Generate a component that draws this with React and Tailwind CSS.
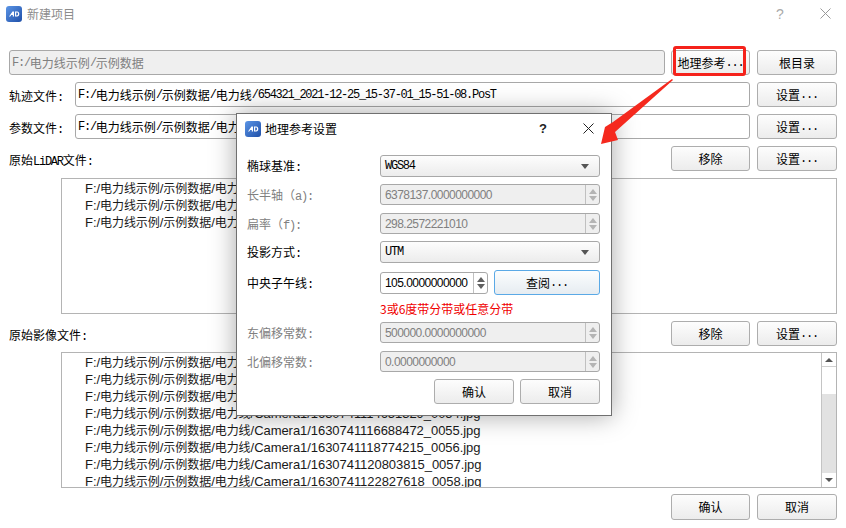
import React from 'react';

const CJK = '"Noto Sans CJK SC", sans-serif';

// qt-style mixed text: cjk at 12px, latin squeezed like the bitmap font
const Mono = ({ children }) => {
  const parts = children.split(/([\u4e00-\u9fff（）]+)/);
  return (
    <>
      {parts.map((p, i) =>
        /[\u4e00-\u9fff（）]/.test(p) ? (
          <span key={i} className="text-[12px] font-['Noto_Sans_CJK_SC']">{p}</span>
        ) : (
          <span key={i} className="text-[12px] tracking-[-1.25px] font-['Liberation_Mono']">{p}</span>
        )
      )}
    </>
  );
};

const Btn = ({ children, className = '' }) => (
  <button className={`h-[25px] rounded-[3px] border border-[#adadad] bg-gradient-to-b from-[#fdfdfd] to-[#ececec] text-black flex items-center justify-center ${className}`}>
    <Mono>{children}</Mono>
  </button>
);

const Logo = ({ className = '' }) => (
  <svg viewBox="0 0 16 16" className={className}>
    <defs>
      <linearGradient id="lg" x1="0" y1="0" x2="1" y2="1">
        <stop offset="0" stopColor="#5b95e6" />
        <stop offset="1" stopColor="#1f4fa8" />
      </linearGradient>
    </defs>
    <rect width="16" height="16" rx="3" fill="url(#lg)" />
    <path d="M3 10.5 L6.5 5.5 H8 V10.5 H6.8 V9 H5.2 L4.2 10.5 Z" fill="#fff" />
    <path d="M9 5.5 H11.2 C14 5.5 14 10.5 11.2 10.5 H9 Z M10.2 6.6 V9.4 H11 C12.4 9.4 12.4 6.6 11 6.6 Z" fill="#fff" fillRule="evenodd" />
  </svg>
);

const Field = ({ children, className = '', disabled = false }) => (
  <div className={`h-[25px] rounded-[3px] border border-[#a8a8a8] flex items-center px-[2px] whitespace-nowrap overflow-hidden ${disabled ? 'bg-[#efefef] text-[#808080]' : 'bg-white text-black'} ${className}`}>
    <Mono>{children}</Mono>
  </div>
);

const Label = ({ children, className = '' }) => (
  <div className={`whitespace-nowrap ${className}`}>
    <Mono>{children}</Mono>
  </div>
);

const Arrows = ({ disabled }) => {
  const c = disabled ? '#b4b4b4' : '#606060';
  return (
    <div className="w-[14px] h-full border-l border-[#c0c0c0] flex flex-col items-center justify-center gap-[2px]">
      <svg width="8" height="5" viewBox="0 0 8 5"><path d="M4 0 L8 5 H0 Z" fill={c} /></svg>
      <svg width="8" height="5" viewBox="0 0 8 5"><path d="M4 5 L8 0 H0 Z" fill={c} /></svg>
    </div>
  );
};

const Spin = ({ value, disabled, className = '' }) => (
  <div className={`flex items-center h-[21px] rounded-[3px] border border-[#a8a8a8] overflow-hidden ${disabled ? 'bg-[#efefef] text-[#808080]' : 'bg-white text-black'} ${className}`}>
    <div className="flex-1 pl-[4px] text-[12px] font-['Liberation_Sans'] tracking-[-0.55px] whitespace-nowrap overflow-hidden">{value}</div>
    <Arrows disabled={disabled} />
  </div>
);

const Combo = ({ value }) => (
  <div className="flex items-center justify-between h-[22px] w-[220px] rounded-[3px] border border-[#a8a8a8] bg-gradient-to-b from-[#fdfdfd] to-[#ececec] pl-[4px] pr-[10px]">
    <Mono>{value}</Mono>
    <svg width="8" height="5" viewBox="0 0 8 5"><path d="M4 5 L8 0 H0 Z" fill="#555" /></svg>
  </div>
);

const DLabel = ({ children, disabled }) => (
  <div className={`w-[133px] shrink-0 leading-[16px] whitespace-nowrap ${disabled ? 'text-[#808080]' : 'text-black'}`}>
    <Mono>{children}</Mono>
  </div>
);

const prefix = 'F:/电力线示例/示例数据/电力线/';
const lidarFiles = ['Lidar/2021-12-25-15-37-01_01.rxp', 'Lidar/2021-12-25-15-37-01_02.rxp', 'Lidar/2021-12-25-15-37-01_03.rxp'];
const imageFiles = ['1630741108572961_0051', '1630741110598204_0052', '1630741112625061_0053', '1630741114651329_0054', '1630741116688472_0055', '1630741118774215_0056', '1630741120803815_0057', '1630741122827618_0058'];

const ListRow = ({ text }) => (
  <div className="h-[17px] leading-[17px] whitespace-nowrap font-['Liberation_Sans'] text-[13px] tracking-[-0.05px] text-[#1a1a1a]">
    {text.split(/([\u4e00-\u9fff]+)/).map((p, i) =>
      /[\u4e00-\u9fff]/.test(p) ? <span key={i} className="text-[12px] font-['Noto_Sans_CJK_SC']">{p}</span> : <span key={i}>{p}</span>
    )}
  </div>
);

const GeoDialog = () => (
  <div className="absolute left-[236px] top-[113px] w-[376px] h-[303px] bg-white border border-[#707070] shadow-[0_0_24px_rgba(0,0,0,0.35)] px-[10px]">
    <div className="h-[29px] flex items-center -ml-[2px] relative">
      <Logo className="w-[16px] h-[16px]" />
      <span className="ml-[4px] text-[12px] text-black font-['Noto_Sans_CJK_SC']">地理参考设置</span>
      <span className="absolute left-[294px] top-[5px] text-[13px] font-semibold text-[#222] font-['Liberation_Sans']">?</span>
      <svg className="absolute left-[338px] top-[9px]" width="11" height="11" viewBox="0 0 11 11"><path d="M0.5 0.5 L10.5 10.5 M10.5 0.5 L0.5 10.5" stroke="#222" /></svg>
    </div>
    <div className="flex items-center mt-[12px]">
      <DLabel>椭球基准:</DLabel>
      <Combo value="WGS84" />
    </div>
    <div className="flex items-center mt-[7px]">
      <DLabel disabled>长半轴（a):</DLabel>
      <Spin value="6378137.0000000000" disabled className="w-[220px]" />
    </div>
    <div className="flex items-center mt-[8px]">
      <DLabel disabled>扁率（f):</DLabel>
      <Spin value="298.2572221010" disabled className="w-[220px]" />
    </div>
    <div className="flex items-center mt-[7px]">
      <DLabel>投影方式:</DLabel>
      <Combo value="UTM" />
    </div>
    <div className="flex items-center mt-[7px]">
      <DLabel>中央子午线:</DLabel>
      <Spin value="105.0000000000" className="w-[108px] h-[22px]" />
      <button className="ml-[6px] w-[106px] h-[25px] rounded-[3px] border border-[#5aa9e6] bg-gradient-to-b from-[#fbfdfe] to-[#e6ecf1] flex items-center justify-center">
        <Mono>查阅...</Mono>
      </button>
    </div>
    <div className="ml-[133px] mt-[5px] h-[17px] leading-[17px] text-[12px] text-[#f00000] font-['Noto_Sans_CJK_SC'] whitespace-nowrap">3或6度带分带或任意分带</div>
    <div className="flex items-center mt-[5px]">
      <DLabel disabled>东偏移常数:</DLabel>
      <Spin value="500000.0000000000" disabled className="w-[220px]" />
    </div>
    <div className="flex items-center mt-[8px]">
      <DLabel disabled>北偏移常数:</DLabel>
      <Spin value="0.0000000000" disabled className="w-[220px]" />
    </div>
    <div className="flex justify-end gap-[6px] mt-[7px] pr-[1px]">
      <Btn className="w-[80px]">确认</Btn>
      <Btn className="w-[80px]">取消</Btn>
    </div>
  </div>
);

const Scrollbar = () => (
  <div className="w-[15px] h-full border-l border-[#c4c4c4] flex flex-col shrink-0 bg-[#e2e2e2]">
    <div className="h-[14px] bg-white flex items-center justify-center border-b border-[#d0d0d0]">
      <svg width="8" height="4" viewBox="0 0 8 4"><path d="M4 0 L8 4 H0 Z" fill="#555" /></svg>
    </div>
    <div className="h-[27px] bg-white" />
    <div className="flex-1" />
    <div className="h-[14px] bg-white flex items-center justify-center">
      <svg width="8" height="4" viewBox="0 0 8 4"><path d="M4 4 L8 0 H0 Z" fill="#555" /></svg>
    </div>
  </div>
);

export default function App() {
  return (
    <div className="relative w-[846px] h-[528px] bg-white overflow-hidden" style={{ fontFamily: CJK }}>
      <div className="h-[28px] flex items-center pl-[6px] relative">
        <Logo className="w-[16px] h-[16px]" />
        <span className="ml-[5px] text-[12px] text-[#8c8c8c]">新建项目</span>
        <span className="absolute left-[776px] top-[4px] text-[14px] text-[#aaa] font-['Liberation_Sans']">?</span>
        <svg className="absolute left-[820px] top-[8px]" width="11" height="11" viewBox="0 0 11 11"><path d="M0.5 0.5 L10.5 10.5 M10.5 0.5 L0.5 10.5" stroke="#999" /></svg>
      </div>

      <div className="px-[9px] pt-[22px] flex flex-col gap-[7px]">
        <div className="flex items-center gap-[6px]">
          <Field disabled className="flex-1">F:/电力线示例/示例数据</Field>
          <Btn className="w-[79px]">地理参考...</Btn>
          <Btn className="w-[80px] ml-[1px]">根目录</Btn>
        </div>
        <div className="flex items-center">
          <Label className="w-[66px]">轨迹文件:</Label>
          <Field className="flex-1">{'F:/电力线示例/示例数据/电力线/654321_2021-12-25_15-37-01_15-51-08.PosT'}</Field>
          <Btn className="w-[80px] ml-[7px]">设置...</Btn>
        </div>
        <div className="flex items-center">
          <Label className="w-[66px]">参数文件:</Label>
          <Field className="flex-1">{'F:/电力线示例/示例数据/电力线/654321.cfg'}</Field>
          <Btn className="w-[80px] ml-[7px]">设置...</Btn>
        </div>
        <div className="flex items-center">
          <Label className="flex-1">原始LiDAR文件:</Label>
          <Btn className="w-[79px]">移除</Btn>
          <Btn className="w-[80px] ml-[7px]">设置...</Btn>
        </div>
        <div className="ml-[52px] h-[136px] border border-[#b4b4b4] pl-[23px] overflow-hidden">
          {lidarFiles.map((f) => <ListRow key={f} text={prefix + f} />)}
        </div>
        <div className="flex items-center">
          <Label className="flex-1">原始影像文件:</Label>
          <Btn className="w-[79px]">移除</Btn>
          <Btn className="w-[80px] ml-[7px]">设置...</Btn>
        </div>
        <div className="ml-[52px] h-[136px] -mt-px border border-[#b4b4b4] flex overflow-hidden">
          <div className="flex-1 pl-[23px] overflow-hidden">
            {imageFiles.map((f) => <ListRow key={f} text={prefix + 'Camera1/' + f + '.jpg'} />)}
          </div>
          <Scrollbar />
        </div>
        <div className="flex justify-end gap-[7px] -mt-px">
          <Btn className="w-[79px] h-[26px]">确认</Btn>
          <Btn className="w-[80px] h-[26px]">取消</Btn>
        </div>
      </div>

      <GeoDialog />

      {/* red callout */}
      <div className="absolute left-[673px] top-[46px] w-[73px] h-[30px] border-[3px] border-[#f5221b] rounded-[3px]" />
      <svg className="absolute left-[590px] top-[75px]" width="90" height="75" viewBox="0 0 90 75">
        <path d="M82 4 L83 5 L25 57 L28 65 L11 69 L15 52 L23 47 Z" fill="#f5291e" />
      </svg>
    </div>
  );
}
